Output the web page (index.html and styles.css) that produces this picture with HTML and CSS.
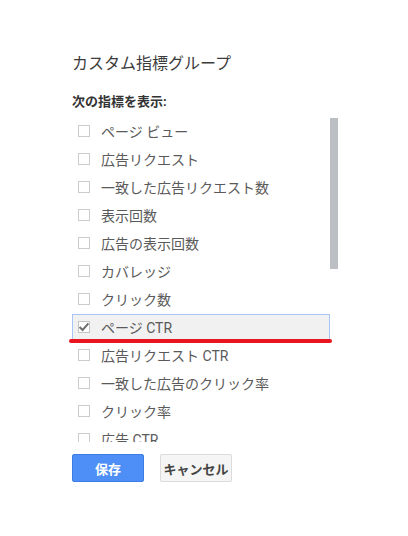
FILE: index.html
```html
<!DOCTYPE html>
<html lang="ja">
<head>
<meta charset="utf-8">
<title>カスタム指標グループ</title>
<link rel="stylesheet" href="styles.css">
</head>
<body>
<div class="dialog">
  <h1 class="title">カスタム指標グループ</h1>
  <div class="label">次の指標を表示:</div>
  <div class="listwrap">
    <ul class="list">
      <li class="row"><span class="box"></span><span class="text">ページ ビュー</span></li>
      <li class="row"><span class="box"></span><span class="text">広告リクエスト</span></li>
      <li class="row"><span class="box"></span><span class="text">一致した広告リクエスト数</span></li>
      <li class="row"><span class="box"></span><span class="text">表示回数</span></li>
      <li class="row"><span class="box"></span><span class="text">広告の表示回数</span></li>
      <li class="row"><span class="box"></span><span class="text">カバレッジ</span></li>
      <li class="row"><span class="box"></span><span class="text">クリック数</span></li>
      <li class="row selected"><span class="box checked"><svg viewBox="0 0 12 12" width="12" height="12"><polyline points="1.6,6 4.6,9 10.4,2.4" fill="none" stroke="#6e6e6e" stroke-width="2"/></svg></span><span class="text">ページ CTR</span></li>
      <li class="row"><span class="box"></span><span class="text">広告リクエスト CTR</span></li>
      <li class="row"><span class="box"></span><span class="text">一致した広告のクリック率</span></li>
      <li class="row"><span class="box"></span><span class="text">クリック率</span></li>
      <li class="row"><span class="box"></span><span class="text">広告 CTR</span></li>
    </ul>
    <div class="scrollbar"><div class="thumb"></div></div>
  </div>
  <div class="buttons">
    <button class="btn primary">保存</button>
    <button class="btn">キャンセル</button>
  </div>
  <div class="mark"></div>
</div>
</body>
</html>
```

FILE: styles.css
```css
html, body {
  margin: 0;
  padding: 0;
  background: #ffffff;
}

body {
  font-family: Roboto, "Noto Sans CJK JP", "Noto Sans", sans-serif;
  color: #555555;
}

.dialog {
  position: relative;
  width: 408px;
  height: 536px;
  box-sizing: border-box;
  padding: 54px 0 0 72px;
}

.title {
  margin: 0;
  font-size: 16px;
  line-height: 20px;
  font-weight: normal;
  color: #3c3c3c;
}

.label {
  margin-top: 19px;
  font-size: 13px;
  line-height: 18px;
  font-weight: bold;
  color: #333333;
}

.listwrap {
  display: flex;
  margin-top: 6px;
  width: 266px;
  height: 325px;
}

.list {
  list-style: none;
  margin: 0;
  padding: 1px 0 0 0;
  width: 258px;
  height: 325px;
  box-sizing: border-box;
  overflow: hidden;
  display: flex;
  flex-direction: column;
  gap: 2px;
}

.scrollbar {
  flex: none;
  width: 8px;
  padding-top: 1px;
}

.thumb {
  height: 151px;
  background: #bcbfc3;
}

.row {
  flex: none;
  display: flex;
  align-items: center;
  height: 26px;
  box-sizing: border-box;
  border: 1px solid transparent;
  font-size: 14px;
  white-space: nowrap;
}

.row.selected {
  background: #f1f1f1;
  border-color: #a9c5f5;
}

.box {
  flex: none;
  width: 12px;
  height: 12px;
  margin-left: 5px;
  margin-right: 11px;
  box-sizing: border-box;
  border: 1px solid #cccccc;
  background: #ffffff;
  display: flex;
  align-items: center;
  justify-content: center;
}

.box.checked {
  border-color: #c4c4c4;
}

.box svg {
  display: block;
  flex: none;
}

.text {
  color: #5a5a5a;
}

.buttons {
  display: flex;
  gap: 16px;
  margin-top: 12px;
}

.btn {
  width: 72px;
  height: 28px;
  box-sizing: border-box;
  border: 1px solid #dcdcdc;
  border-radius: 2px;
  background: #f5f5f5;
  color: #444444;
  font-family: Roboto, "Noto Sans CJK JP", sans-serif;
  font-size: 13px;
  font-weight: bold;
  padding: 0;
}

.btn.primary {
  background: #4d8ff6;
  border-color: #3b7ce8;
  color: #ffffff;
}

.mark {
  position: absolute;
  left: 69px;
  top: 339px;
  width: 263px;
  height: 4px;
  border-radius: 2px;
  background: #e8141f;
}
```
